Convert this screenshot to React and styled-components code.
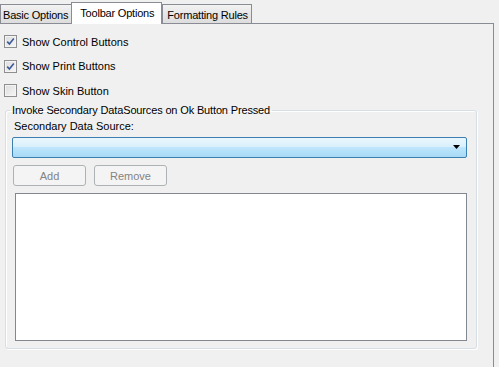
import React from 'react'
import styled, { createGlobalStyle } from 'styled-components'

const GlobalStyle = createGlobalStyle`
  html, body {
    margin: 0;
    padding: 0;
    background: #f0f0f0;
    overflow: hidden;
  }
  body {
    font-family: "Liberation Sans", Arial, sans-serif;
    font-size: 11px;
    color: #000;
  }
`

const tabs = ['Basic Options', 'Toolbar Options', 'Formatting Rules']
const options = [
  { label: 'Show Control Buttons', checked: true },
  { label: 'Show Print Buttons', checked: true },
  { label: 'Show Skin Button', checked: false },
]

function App() {
  return (
    <Page>
      <GlobalStyle />
      <TabStrip>
        {tabs.map((t, i) => (
          <Tab key={t} selected={i === 1}>{t}</Tab>
        ))}
      </TabStrip>
      <Panel>
        <CheckList>
          {options.map(o => (
            <CheckRow key={o.label}>
              <CheckBox>
                {o.checked && (
                  <svg width="9" height="9" viewBox="0 0 9 9">
                    <path d="M1.2 4.6 L3.4 7 L7.8 1.4" fill="none" stroke="#3c5a9a" strokeWidth="1.6" />
                  </svg>
                )}
              </CheckBox>
              <span>{o.label}</span>
            </CheckRow>
          ))}
        </CheckList>
        <GroupBox>
          <Legend>Invoke Secondary DataSources on Ok Button Pressed</Legend>
          <FieldLabel>Secondary Data Source:</FieldLabel>
          <Combo>
            <svg width="8" height="5" viewBox="0 0 8 5">
              <path d="M0 0 H7 L3.5 4 Z" fill="#000" />
            </svg>
          </Combo>
          <ButtonRow>
            <Button disabled>Add</Button>
            <Button disabled>Remove</Button>
          </ButtonRow>
          <ListBox />
        </GroupBox>
      </Panel>
    </Page>
  )
}

const Page = styled.div`
  width: 499px;
  height: 367px;
  overflow: hidden;
`

const TabStrip = styled.div`
  display: flex;
  align-items: flex-end;
  height: 23px;
  position: relative;
  z-index: 1;
`

const Tab = styled.div`
  box-sizing: border-box;
  display: flex;
  align-items: center;
  border: 1px solid #898c95;
  border-bottom: none;
  margin-right: ${p => (p.selected ? '0' : '-1px')};
  height: ${p => (p.selected ? '22px' : '19px')};
  margin-bottom: ${p => (p.selected ? '-1px' : '0')};
  padding: ${p => (p.selected ? '0 7px 2px 8px' : '1px 3px 0 4px')};
  background: ${p => (p.selected ? '#ffffff' : 'linear-gradient(#f3f3f3, #e6e6e6 50%, #dddddd)')};
  position: relative;
  z-index: ${p => (p.selected ? 2 : 1)};
  white-space: nowrap;
  letter-spacing: -0.2px;
  &:first-child {
    padding-left: 2px;
  }
`

const Panel = styled.div`
  box-sizing: border-box;
  width: 495px;
  height: 344px;
  margin-left: -1px;
  border: 1px solid #898c95;
  border-bottom: none;
  background: #f0f0f0;
  padding-top: 11px;
`

const CheckList = styled.div`
  display: flex;
  flex-direction: column;
  gap: 11.5px;
  padding-left: 4px;
`

const CheckRow = styled.label`
  display: flex;
  align-items: center;
  gap: 5px;
  height: 13px;
`

const CheckBox = styled.span`
  box-sizing: border-box;
  width: 13px;
  height: 13px;
  border: 1px solid #8e8f8f;
  background: linear-gradient(135deg, #dcdcdc, #f6f6f6);
  box-shadow: inset 0 0 0 1px #f4f4f4;
  display: flex;
  align-items: center;
  justify-content: center;
`

const GroupBox = styled.fieldset`
  box-sizing: border-box;
  margin: 7px 0 0 5px;
  width: 472px;
  padding: 0 9px 7px 6px;
  border: 1px solid #d5dfe5;
  border-radius: 3px;
  box-shadow: inset 1px 1px 0 #fff, 1px 1px 0 #fff;
`

const Legend = styled.legend`
  margin-left: -2px;
  padding: 0 2px;
  line-height: 13px;
  letter-spacing: -0.15px;
`

const FieldLabel = styled.div`
  line-height: 13px;
  margin: 3px 0 4px 2px;
`

const Combo = styled.div`
  box-sizing: border-box;
  height: 21px;
  border: 1px solid #3c7fb1;
  border-radius: 2px;
  background: linear-gradient(#eaf6fd 0%, #d9f0fc 45%, #bee6fd 50%, #a7d9f5 100%);
  display: flex;
  align-items: center;
  justify-content: flex-end;
  padding-right: 5px;
`

const ButtonRow = styled.div`
  display: flex;
  gap: 8px;
  margin: 7px 0 7px 1px;
`

const Button = styled.button`
  box-sizing: border-box;
  width: 73px;
  height: 21px;
  border: 1px solid #adb2b5;
  border-radius: 3px;
  background: #f4f4f4;
  color: #838383;
  font-family: "Liberation Sans", Arial, sans-serif;
  font-size: 11px;
  padding: 0;
`

const ListBox = styled.div`
  box-sizing: border-box;
  height: 148px;
  margin-left: 3px;
  border: 1px solid #828790;
  background: #fff;
`

export default App
